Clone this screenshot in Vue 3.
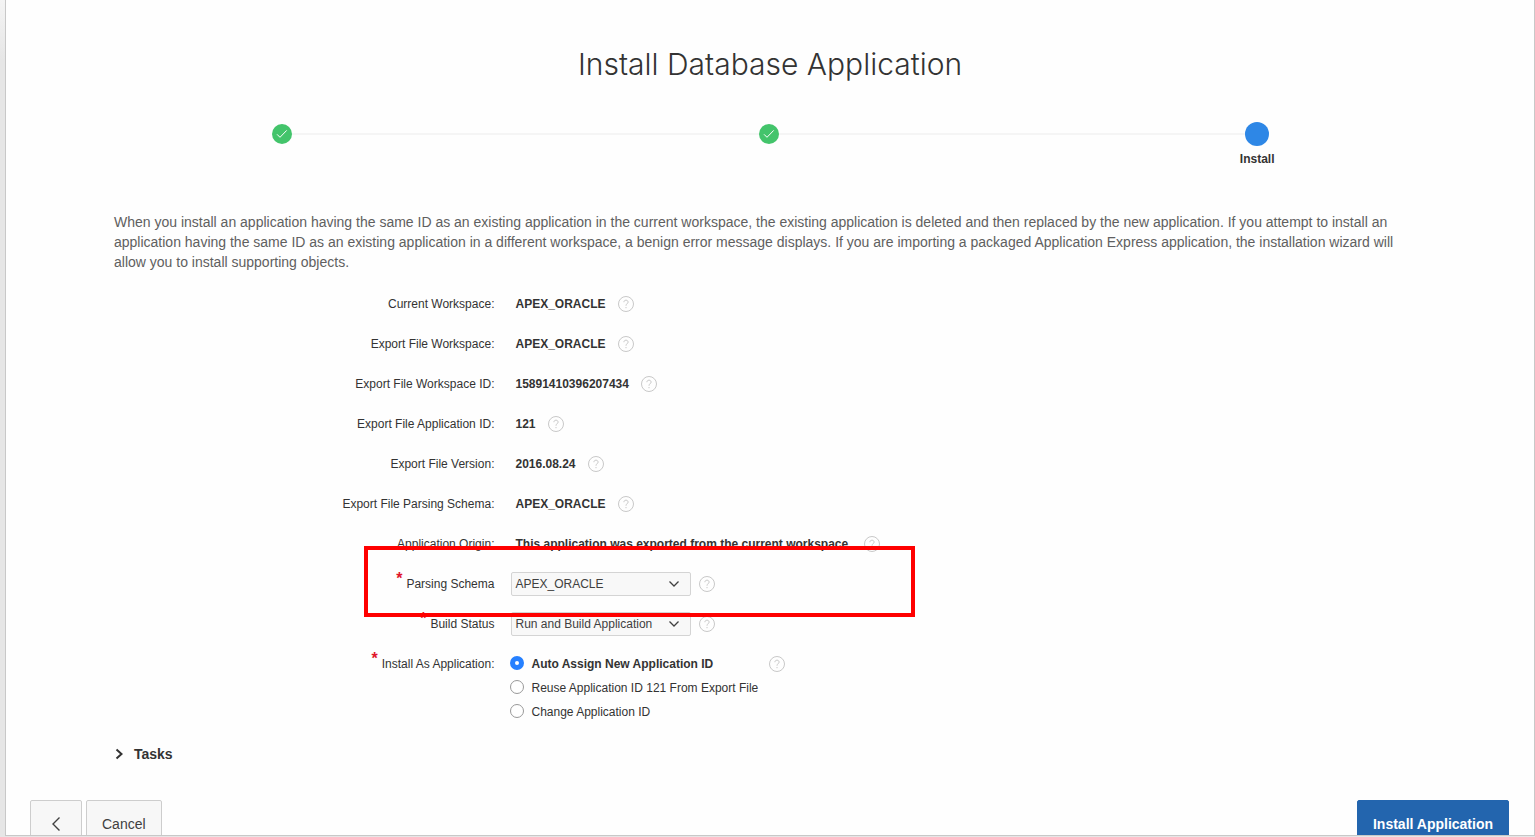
<script setup>
import { ref } from 'vue'

const details = [
  { label: 'Current Workspace:', value: 'APEX_ORACLE' },
  { label: 'Export File Workspace:', value: 'APEX_ORACLE' },
  { label: 'Export File Workspace ID:', value: '15891410396207434' },
  { label: 'Export File Application ID:', value: '121' },
  { label: 'Export File Version:', value: '2016.08.24' },
  { label: 'Export File Parsing Schema:', value: 'APEX_ORACLE' },
  { label: 'Application Origin:', value: 'This application was exported from the current workspace.' },
]

const selects = [
  { id: 'parsing-schema', label: 'Parsing Schema', option: 'APEX_ORACLE', highlighted: true },
  { id: 'build-status', label: 'Build Status', option: 'Run and Build Application', highlighted: false },
]

const choices = [
  { value: 'auto', label: 'Auto Assign New Application ID' },
  { value: 'reuse', label: 'Reuse Application ID 121 From Export File' },
  { value: 'change', label: 'Change Application ID' },
]
const installAs = ref('auto')
</script>

<template>
  <main class="panel">
    <h1 class="title">Install Database Application</h1>

    <ol class="steps">
      <li class="step">
        <span class="dot done">
          <svg width="12" height="10" viewBox="0 0 12 10"><path d="M1 5.3 4 8.3 10.7 1.4" /></svg>
        </span>
      </li>
      <li class="step">
        <span class="dot done">
          <svg width="12" height="10" viewBox="0 0 12 10"><path d="M1 5.3 4 8.3 10.7 1.4" /></svg>
        </span>
      </li>
      <li class="step">
        <span class="dot current"></span>
        <span class="step-name">Install</span>
      </li>
    </ol>

    <section class="content">
      <p class="intro">
        When you install an application having the same ID as an existing application in the current workspace, the
        existing application is deleted and then replaced by the new application. If you attempt to install an
        application having the same ID as an existing application in a different workspace, a benign error message
        displays. If you are importing a packaged Application Express application, the installation wizard will allow
        you to install supporting objects.
      </p>

      <form class="form" @submit.prevent>
        <div v-for="item in details" :key="item.label" class="row">
          <span class="label">{{ item.label }}</span>
          <div class="field">
            <strong class="value">{{ item.value }}</strong>
            <button type="button" class="help" aria-label="Help">
              <svg width="16" height="16" viewBox="0 0 16 16"><circle cx="8" cy="8" r="7.5" /><path d="M5.9 6.2C5.9 4.9 6.8 4.2 8 4.2s2.1.8 2.1 1.9c0 1.5-2.1 1.7-2.1 3.6M8 11v1.2" /></svg>
            </button>
          </div>
        </div>

        <div v-for="item in selects" :key="item.id" class="row">
          <label class="label" :for="item.id"><span class="required">*</span>{{ item.label }}</label>
          <div class="field">
            <span class="select-box">
              <select :id="item.id" class="select">
                <option>{{ item.option }}</option>
              </select>
              <svg class="chevron" width="12" height="8" viewBox="0 0 12 8"><path d="M1.5 1.5 6 6l4.500-4.500" /></svg>
            </span>
            <button type="button" class="help" aria-label="Help">
              <svg width="16" height="16" viewBox="0 0 16 16"><circle cx="8" cy="8" r="7.5" /><path d="M5.9 6.2C5.9 4.9 6.8 4.2 8 4.2s2.1.8 2.1 1.9c0 1.5-2.1 1.7-2.1 3.6M8 11v1.2" /></svg>
            </button>
          </div>
          <span v-if="item.highlighted" class="highlight"></span>
        </div>

        <div class="row choices-row" role="radiogroup" aria-labelledby="install-as">
          <span id="install-as" class="label"><span class="required">*</span>Install As Application:</span>
          <div class="field">
            <div class="choices">
              <label v-for="choice in choices" :key="choice.value" class="choice" :class="{ picked: installAs === choice.value }">
                <input v-model="installAs" class="radio" type="radio" name="install-as" :value="choice.value" />
                {{ choice.label }}
              </label>
            </div>
            <button type="button" class="help" aria-label="Help">
              <svg width="16" height="16" viewBox="0 0 16 16"><circle cx="8" cy="8" r="7.5" /><path d="M5.9 6.2C5.9 4.9 6.8 4.2 8 4.2s2.1.8 2.1 1.9c0 1.5-2.1 1.7-2.1 3.6M8 11v1.2" /></svg>
            </button>
          </div>
        </div>
      </form>

      <button type="button" class="tasks" aria-expanded="false">
        <svg width="10" height="12" viewBox="0 0 10 12"><path d="M2.500 1.500 7.500 6l-5 4.500" /></svg>
        Tasks
      </button>
    </section>

    <footer class="footer">
      <button type="button" class="button back" aria-label="Back">
        <svg width="10" height="16" viewBox="0 0 10 16"><path d="M8.500 1.500 2 8l6.500 6.500" /></svg>
      </button>
      <button type="button" class="button">Cancel</button>
      <button type="button" class="button primary">Install Application</button>
    </footer>
  </main>
</template>

<style>
body {
  background: linear-gradient(#f4f4f4, #e6e6e6 60px);
  overflow: hidden;
}
</style>

<style scoped>
.panel {
  margin: 0 0 1px 5px;
  border: solid #c8c8c8;
  border-width: 0 1px 1px;
  background: #fefefe;
  color: #333;
  font: 12px/16px "Liberation Sans", Arial, sans-serif;
}
button {
  font: inherit;
  color: inherit;
  border: 0;
  padding: 0;
  background: none;
}
svg {
  display: block;
  fill: none;
  stroke: currentColor;
}
.title {
  margin: 0;
  padding-top: 44px;
  text-align: center;
  font: 300 30px/40px Inter, "Liberation Sans", sans-serif;
}
.steps {
  list-style: none;
  margin: 38px 0 0;
  padding: 0 33px 0 32px;
  display: grid;
  grid-template-columns: repeat(3, 1fr);
}
.step {
  position: relative;
  display: flex;
  flex-direction: column;
  align-items: center;
  height: 48px;
}
.step + .step::before {
  content: "";
  position: absolute;
  top: 11px;
  left: -50%;
  width: 100%;
  height: 2px;
  background: #f5f5f5;
}
.dot {
  position: relative;
  z-index: 1;
  display: flex;
  align-items: center;
  justify-content: center;
  border-radius: 50%;
}
.done {
  width: 20px;
  height: 20px;
  margin-top: 2px;
  background: #43c46b;
  color: #fff;
}
.current {
  width: 24px;
  height: 24px;
  background: #2e87e6;
}
.step-name {
  margin-top: 5px;
  font-weight: bold;
}
.content {
  padding: 42px 108px 0;
}
.intro {
  margin: 0 0 12px;
  font-size: 14px;
  line-height: 20px;
  color: #606060;
}
.row {
  position: relative;
  display: grid;
  grid-template-columns: 29% 1fr;
  column-gap: 17px;
  align-items: center;
  height: 40px;
}
.label {
  text-align: right;
}
.required {
  margin-right: 4px;
  color: #e0162b;
  font-size: 16px;
  font-weight: bold;
  line-height: 0;
  vertical-align: 4px;
}
.field {
  display: flex;
  align-items: center;
  gap: 8px;
}
.value {
  padding: 0 4px;
}
.help {
  color: #c8c8c8;
}
.select-box {
  position: relative;
  width: 180px;
}
.select {
  appearance: none;
  display: block;
  width: 100%;
  height: 24px;
  margin: 0;
  padding: 0 24px 0 3px;
  border: 1px solid #d4d4d4;
  border-radius: 2px;
  background: #f8f8f8;
  color: #404040;
  font: inherit;
}
.chevron {
  position: absolute;
  top: 8px;
  right: 11px;
  color: #404040;
  stroke-width: 1.3;
  pointer-events: none;
}
.highlight {
  position: absolute;
  z-index: 2;
  top: -18px;
  left: 250px;
  width: 551px;
  height: 71px;
  box-sizing: border-box;
  border: 4px solid #f00;
  pointer-events: none;
}
.choices-row {
  height: auto;
  align-items: start;
  padding: 8px 0 0;
}
.choices-row .label {
  line-height: 24px;
}
.choices-row .field {
  align-items: start;
}
.choices-row .help {
  margin-top: 4px;
}
.choices {
  padding-right: 3px;
}
.choice {
  display: flex;
  align-items: center;
  gap: 7px;
  height: 24px;
}
.picked {
  font-weight: bold;
}
.radio {
  appearance: none;
  box-sizing: border-box;
  width: 14px;
  height: 14px;
  margin: 0 0 2px -1px;
  border: 1px solid #999;
  border-radius: 50%;
  background: #fff;
}
.radio:checked {
  border: 5px solid #2680ff;
}
.tasks {
  display: flex;
  align-items: center;
  gap: 10px;
  margin-top: 20px;
  font-size: 14px;
  line-height: 20px;
  font-weight: bold;
}
.tasks svg {
  stroke-width: 2;
}
.footer {
  display: flex;
  align-items: flex-start;
  gap: 4px;
  height: 35px;
  margin-top: 36px;
  padding: 0 25px 0 24px;
  overflow: hidden;
}
.button {
  box-sizing: border-box;
  display: flex;
  align-items: center;
  justify-content: center;
  height: 48px;
  padding: 0 15px;
  border: 1px solid #cdcdcd;
  border-radius: 2px;
  background: #f7f7f7;
  color: #404040;
  font-size: 14px;
}
.back {
  width: 52px;
}
.back svg {
  stroke-width: 1.4;
}
.primary {
  margin-left: auto;
  border-color: #2365ae;
  background: #2365ae;
  color: #fff;
  font-weight: bold;
}
</style>
